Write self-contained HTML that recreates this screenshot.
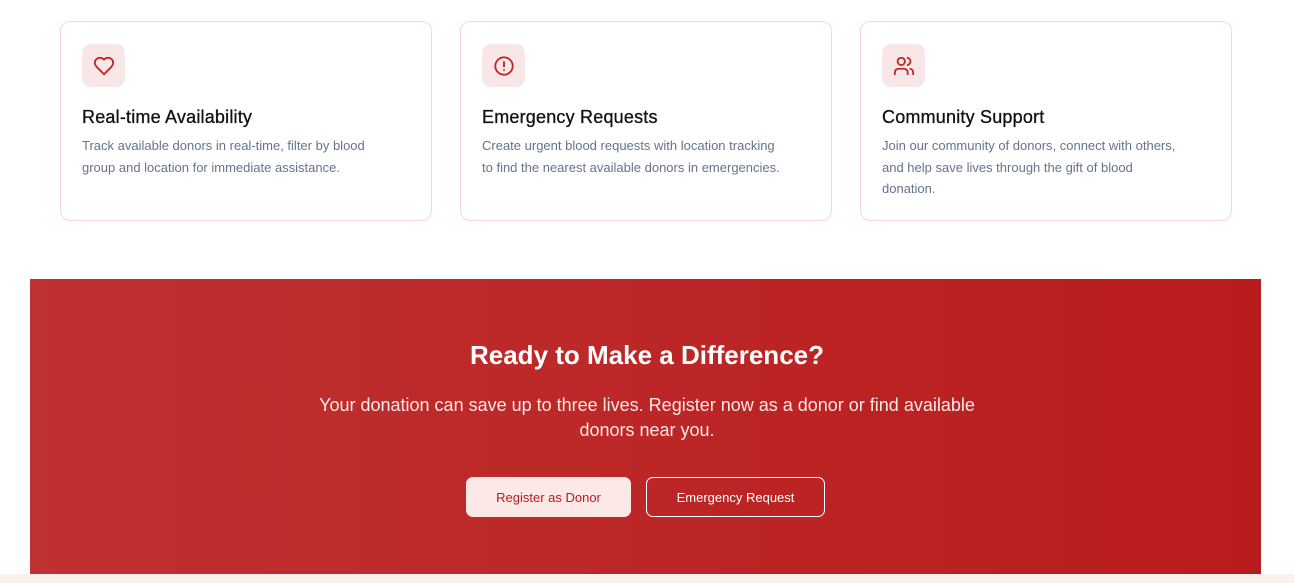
<!DOCTYPE html>
<html><head><style>
*{margin:0;padding:0;box-sizing:border-box}
body{width:1294px;height:583px;background:#fff;font-family:"Liberation Sans",sans-serif;position:relative;overflow:hidden}
.card{position:absolute;top:21px;width:372px;height:200px;border:1px solid #fbd5d5;border-radius:10px;background:#fff}
.ic{position:absolute;left:21px;top:22px;width:43px;height:43px;border-radius:9px;background:#f9e6e6;display:flex;align-items:center;justify-content:center}
.card h3{position:absolute;left:21px;top:85px;font-size:18px;font-weight:normal;color:#111;letter-spacing:.2px;-webkit-text-stroke:.3px #111}
.card p{position:absolute;left:21px;top:113px;width:340px;font-size:13px;line-height:21.5px;color:#64748b;white-space:nowrap}
.banner{position:absolute;left:30px;top:279px;width:1231px;height:295px;background:linear-gradient(90deg,#c03131,#b91c1c)}
.bottom{position:absolute;left:0;top:574px;width:1294px;height:9px;background:#fcf0ef}
h2{position:absolute;top:340px;left:0;width:1294px;text-align:center;color:#fff;font-size:26px;font-weight:bold}
.sub{position:absolute;top:393px;left:312px;width:670px;text-align:center;color:#fde8e8;font-size:18px;line-height:25px}
.btn{position:absolute;top:477px;height:40px;border-radius:7px;font-size:13px;display:flex;align-items:center;justify-content:center}
</style></head><body>
<div class="card" style="left:60px">
 <div class="ic"><svg width="22" height="22" viewBox="0 0 24 24" fill="none" stroke="#c02626" stroke-width="2" stroke-linecap="round" stroke-linejoin="round"><path d="M19 14c1.5-1.5 3-3.2 3-5.5A5.5 5.5 0 0 0 16.5 3c-1.8 0-3 .5-4.5 2-1.5-1.5-2.7-2-4.5-2A5.5 5.5 0 0 0 2 8.5c0 2.3 1.5 4 3 5.5l7 7Z"/></svg></div>
 <h3>Real-time Availability</h3>
 <p>Track available donors in real-time, filter by blood<br>group and location for immediate assistance.</p>
</div>
<div class="card" style="left:460px">
 <div class="ic"><svg width="22" height="22" viewBox="0 0 24 24" fill="none" stroke="#c02626" stroke-width="2" stroke-linecap="round"><circle cx="12" cy="12" r="9.5"/><path d="M12 7.5v5M12 16.3v.1"/></svg></div>
 <h3>Emergency Requests</h3>
 <p>Create urgent blood requests with location tracking<br>to find the nearest available donors in emergencies.</p>
</div>
<div class="card" style="left:860px">
 <div class="ic"><svg width="22" height="22" viewBox="0 0 24 24" fill="none" stroke="#c02626" stroke-width="2" stroke-linecap="round" stroke-linejoin="round"><path d="M16 21v-2a4 4 0 0 0-4-4H6a4 4 0 0 0-4 4v2"/><circle cx="9" cy="7" r="4"/><path d="M22 21v-2a4 4 0 0 0-3-3.87M16 3.13a4 4 0 0 1 0 7.75"/></svg></div>
 <h3>Community Support</h3>
 <p>Join our community of donors, connect with others,<br>and help save lives through the gift of blood<br>donation.</p>
</div>
<div class="banner"></div>
<div class="bottom"></div>
<h2>Ready to Make a Difference?</h2>
<div class="sub">Your donation can save up to three lives. Register now as a donor or find available donors near you.</div>
<div class="btn" style="left:466px;width:165px;background:#fce8e7;color:#b91c1c">Register as Donor</div>
<div class="btn" style="left:646px;width:179px;border:1px solid #fff;color:#fff">Emergency Request</div>
</body></html>
